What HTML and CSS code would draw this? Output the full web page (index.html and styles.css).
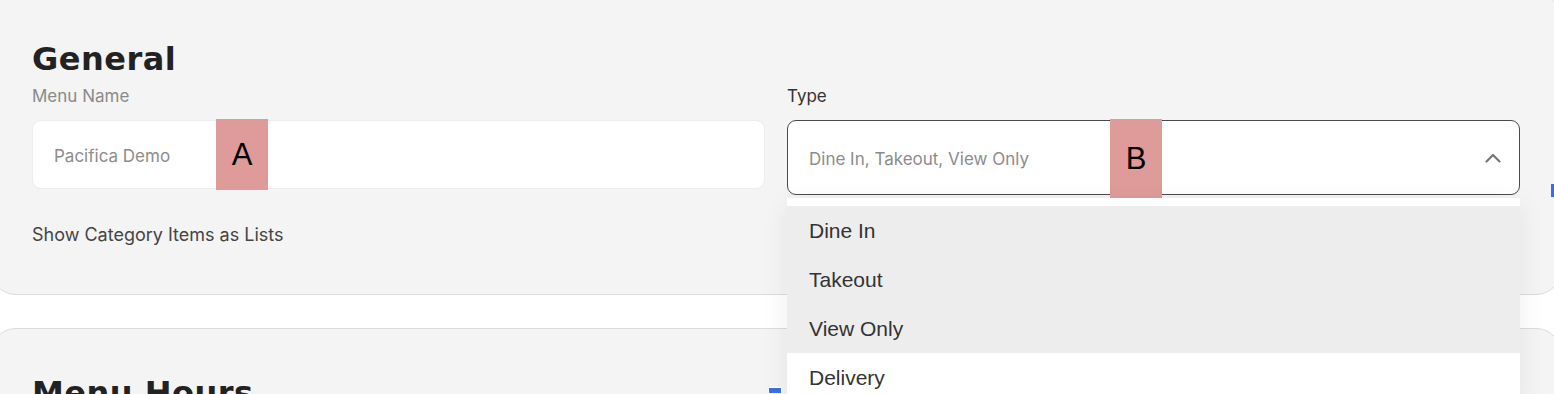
FILE: index.html
```html
<!DOCTYPE html>
<html lang="en">
<head>
    <meta charset="UTF-8">
    <title>Menu settings</title>
    <link rel="stylesheet" href="styles.css">
</head>
<body>
<div class="page">
    <div class="card">
        <h2 class="card-title">General</h2>
        <div class="fields">
            <div class="field">
                <label class="label muted">Menu Name</label>
                <div class="input">
                    <span class="value">Pacifica Demo</span>
                    <span class="tag tag-a">A</span>
                </div>
            </div>
            <div class="field select-field">
                <label class="label">Type</label>
                <div class="select">
                    <span class="value">Dine In, Takeout, View Only</span>
                    <span class="tag tag-b">B</span>
                    <svg class="chevron" width="16" height="10" viewBox="0 0 16 10">
                        <path d="M1.5 8.5 L8 2 L14.5 8.5" fill="none" stroke="#777" stroke-width="2.2" stroke-linecap="round" stroke-linejoin="round"/>
                    </svg>
                </div>
                <ul class="options">
                    <li class="option active">Dine In</li>
                    <li class="option active">Takeout</li>
                    <li class="option active">View Only</li>
                    <li class="option">Delivery</li>
                </ul>
            </div>
        </div>
        <div class="toggle-row">Show Category Items as Lists</div>
    </div>

    <div class="card">
        <h2 class="card-title">Menu Hours</h2>
    </div>
</div>
<div class="mark mark-right"></div>
<div class="mark mark-bottom"></div>
</body>
</html>
```

FILE: styles.css
```css
html, body {
    margin: 0;
    background: #fff;
    overflow: hidden;
    height: 394px;
}

body {
    font-family: "Inter", "Liberation Sans", sans-serif;
    color: #333;
    position: relative;
}

.page {
    margin: -6px 0 0 -10px;
    width: 1572px;
}

.card {
    background: #f4f4f4;
    border: 1px solid #dcdcdc;
    border-radius: 26px;
    padding: 40px 41px 47px;
    margin-bottom: 33px;
}

.card-title {
    margin: 4px 0 0;
    font-family: "DejaVu Sans", sans-serif;
    font-weight: bold;
    font-size: 32px;
    line-height: 40px;
    letter-spacing: 0.5px;
    color: #222;
}

.fields {
    display: grid;
    grid-template-columns: 1fr 1fr;
    gap: 22px;
    align-items: start;
    margin-top: 5px;
}

.field {
    position: relative;
}

.label {
    display: block;
    font-size: 17px;
    line-height: 24px;
    margin-bottom: 12px;
    color: #333;
}

.label.muted {
    color: #8a8a8a;
}

.input, .select {
    position: relative;
    display: flex;
    align-items: center;
    background: #fff;
    border-radius: 9px;
    padding: 0 21px;
    box-sizing: border-box;
}

.input {
    height: 69px;
    border: 1px solid #ececec;
}

.select {
    height: 75px;
    border: 1px solid #4a4a4a;
}

.value {
    font-size: 17px;
    color: #8c8c8c;
}

.input .value {
    padding-top: 2px;
}

.select .value {
    padding-top: 3px;
}

.chevron {
    margin-left: auto;
    margin-right: -3px;
}

.tag {
    position: absolute;
    top: -2px;
    width: 52px;
    background: #de9b9a;
    color: #000;
    font-family: "Liberation Sans", sans-serif;
    font-size: 31px;
    display: flex;
    align-items: center;
    justify-content: center;
}

.tag-a {
    left: 183px;
    height: 71px;
}

.tag-b {
    left: 322px;
    height: 80px;
}

.options {
    position: absolute;
    left: 0;
    right: 0;
    top: 114px;
    margin: 0;
    padding: 8px 0 0;
    list-style: none;
    background: #fff;
    box-shadow: 0 6px 26px rgba(0, 0, 0, 0.07);
    z-index: 2;
}

.option {
    height: 49px;
    line-height: 50px;
    padding-left: 22px;
    font-family: "Liberation Sans", sans-serif;
    font-size: 21px;
    color: #333;
}

.option.active {
    background: #ededed;
}

.toggle-row {
    margin-top: 28px;
    font-size: 18px;
    line-height: 24px;
    color: #444;
}

.mark {
    position: absolute;
    background: #3a6ee0;
    z-index: 3;
}

.mark-right {
    left: 1551px;
    top: 184px;
    width: 4px;
    height: 13px;
}

.mark-bottom {
    left: 768px;
    top: 387px;
    width: 14px;
    height: 7px;
    border: 1px solid #fff;
    box-sizing: border-box;
}
```
